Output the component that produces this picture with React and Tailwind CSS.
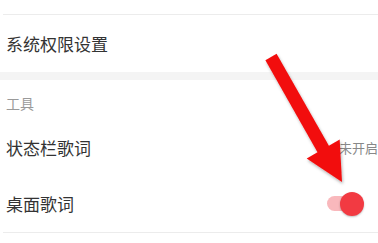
import React from 'react';

const font = { fontFamily: '"Noto Sans CJK SC", "Noto Sans", sans-serif' };

function Toggle() {
  return (
    <div className="relative w-[38px] h-[26px] flex items-center">
      <div className="absolute left-[1px] w-[26px] h-[15px] rounded-full bg-[#f9b8bc]" />
      <div className="absolute right-0 w-[24px] h-[24px] rounded-full bg-[#f23a42] shadow-[0_1px_2px_rgba(0,0,0,0.25)]" />
    </div>
  );
}

function Arrow() {
  return (
    <svg className="absolute left-0 top-0" width="378" height="243" viewBox="0 0 378 243">
      <defs>
        <filter id="sh" x="-20%" y="-20%" width="140%" height="140%">
          <feDropShadow dx="1" dy="2" stdDeviation="1.5" floodColor="#000" floodOpacity="0.3" />
        </filter>
      </defs>
      <polygon
        points="265.4,60.2 276.6,53.8 328.9,145.8 339.7,139.6 342,182 306.7,158.4 317.5,152.2"
        fill="#f20d0d"
        filter="url(#sh)"
      />
    </svg>
  );
}

export default function App() {
  return (
    <div className="relative w-[378px] h-[243px] overflow-hidden bg-white" style={font}>
      <div className="h-[14px]" />
      <div className="ml-[3px] border-t border-[#ececec]" />
      <div className="h-[57px] flex items-center px-[6px]">
        <span className="text-[17px] text-[#333]">系统权限设置</span>
      </div>
      <div className="h-[8px] bg-[#f4f4f4]" />
      <div className="h-[46px] flex items-center px-[6px]">
        <span className="text-[14px] text-[#9a9a9a]">工具</span>
      </div>
      <div className="h-[44px] flex items-center justify-between pl-[6px]">
        <span className="text-[17px] text-[#333]">状态栏歌词</span>
        <span className="text-[13px] text-[#888]">未开启</span>
      </div>
      <div className="h-[62px] pt-[5px] flex items-center justify-between pl-[6px] pr-[14px]">
        <span className="text-[17px] text-[#333]">桌面歌词</span>
        <Toggle />
      </div>
      <div className="ml-[3px] border-t border-[#ececec]" />
      <Arrow />
    </div>
  );
}
